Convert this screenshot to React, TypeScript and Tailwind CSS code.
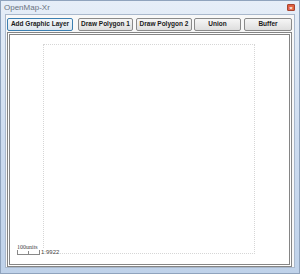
const buttons = [
  { label: 'Add Graphic Layer', w: 'w-[66px]', ml: 'ml-0', focus: true },
  { label: 'Draw Polygon 1', w: 'w-[55px]', ml: 'ml-[5px]', focus: false },
  { label: 'Draw Polygon 2', w: 'w-[56px]', ml: 'ml-[3px]', focus: false },
  { label: 'Union', w: 'w-[47px]', ml: 'ml-[2px]', focus: false },
  { label: 'Buffer', w: 'w-[48px]', ml: 'ml-[3px]', focus: false },
]

export default function App() {
  return (
    <div className="w-[300px] h-[274px] flex flex-col bg-linear-to-b from-[#e6eef8] via-[#cddcf0] to-[#bfd2ea] border border-[#8fa3bd] font-['Liberation_Sans',sans-serif]">
      {/* title bar */}
      <div className="h-[13px] flex items-center justify-between pl-[3px] pr-[4px] shrink-0">
        <span className="text-[8px] leading-none text-[#6a7380]">OpenMap-Xr</span>
        <div className="w-[8px] h-[7px] rounded-[1px] bg-[#e0603f] border border-[#a84430] flex items-center justify-center">
          <span className="text-[6px] leading-none text-white font-bold">×</span>
        </div>
      </div>

      {/* client area */}
      <div className="flex-1 mx-[4px] mb-[5px] flex flex-col bg-[#f8f8f8] border border-[#a9b8cc] px-[1px]">
        <div className="flex items-center pt-[2px] h-[16px] shrink-0">
          {buttons.map((b) => (
            <button
              key={b.label}
              className={`${b.w} ${b.ml} h-[13px] rounded-[2px] border text-[6.5px] font-bold leading-none text-[#1a1a1a] bg-linear-to-b ${
                b.focus
                  ? 'border-[#3c7fb1] from-[#f4f8fb] to-[#dde6ee]'
                  : 'border-[#8a8a8a] from-[#f6f6f6] to-[#dedede]'
              }`}
            >
              {b.label}
            </button>
          ))}
        </div>

        {/* map panel */}
        <div className="flex-1 mt-[1px] mr-[1px] border-[3px] border-double border-[#858585] bg-white relative">
          <div className="absolute left-[33px] top-[9px] right-[34px] bottom-[10px] border border-dotted border-[#d6d6d6]" />

          {/* scale bar */}
          <div className="absolute left-[7px] bottom-[9px] flex items-end gap-[1px]">
            <div className="flex flex-col">
              <span className="text-[6px] leading-none text-[#444] font-['Liberation_Serif',serif]">100units</span>
              <div className="w-[23px] h-[5px] border border-t-0 border-[#888] bg-white flex justify-center">
                <div className="w-px h-[3px] bg-[#888] mt-[1px]" />
              </div>
            </div>
            <span className="text-[6px] leading-none text-[#444] bg-white">1:9922</span>
          </div>
        </div>
      </div>
    </div>
  )
}
